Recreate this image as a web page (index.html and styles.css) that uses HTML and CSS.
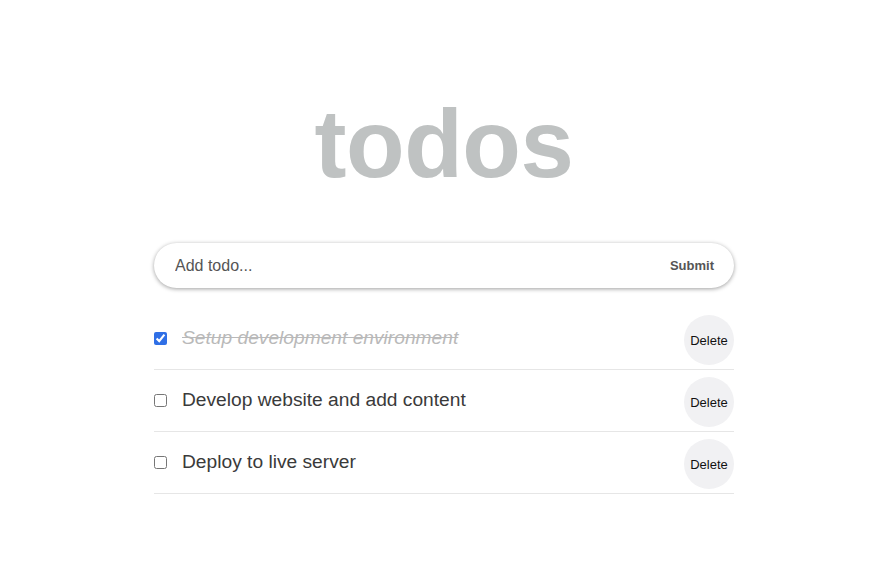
FILE: index.html
```html
<!DOCTYPE html>
<html lang="en">
<head>
<meta charset="utf-8">
<title>todos</title>
<link rel="stylesheet" href="styles.css">
</head>
<body>
<div class="page">
  <main class="app">
    <h1 class="title">todos</h1>
    <form class="add-form">
      <input class="add-input" type="text" placeholder="Add todo...">
      <button class="add-submit" type="button">Submit</button>
    </form>
    <ul class="todo-list">
      <li class="todo-item done">
        <label class="todo-label">
          <input class="todo-check" type="checkbox" checked>
          <span class="todo-text">Setup development environment</span>
        </label>
        <button class="todo-delete" type="button">Delete</button>
      </li>
      <li class="todo-item">
        <label class="todo-label">
          <input class="todo-check" type="checkbox">
          <span class="todo-text">Develop website and add content</span>
        </label>
        <button class="todo-delete" type="button">Delete</button>
      </li>
      <li class="todo-item">
        <label class="todo-label">
          <input class="todo-check" type="checkbox">
          <span class="todo-text">Deploy to live server</span>
        </label>
        <button class="todo-delete" type="button">Delete</button>
      </li>
    </ul>
  </main>
</div>
</body>
</html>
```

FILE: styles.css
```css
* {
  box-sizing: border-box;
}

body {
  margin: 0;
  background: #ffffff;
  font-family: "Liberation Sans", Arial, Helvetica, sans-serif;
  color: #333333;
}

.page {
  padding-left: 11px;
}

.app {
  width: 580px;
  margin: 0 auto;
  padding-top: 96px;
}

.title {
  margin: 0;
  font-size: 96px;
  line-height: 96px;
  font-weight: 700;
  text-align: center;
  color: #bfc2c2;
  letter-spacing: -0.5px;
}

.add-form {
  margin-top: 51px;
  height: 45px;
  border-radius: 23px;
  background: #ffffff;
  box-shadow: 0 1px 4px rgba(0, 0, 0, 0.38);
  display: flex;
  align-items: center;
  padding: 0 20px 0 21px;
}

.add-input {
  flex: 1;
  border: 0;
  outline: none;
  background: transparent;
  font-family: inherit;
  font-size: 16px;
  color: #333;
  padding: 0;
}

.add-input::placeholder {
  color: #555555;
}

.add-submit {
  border: 0;
  background: transparent;
  padding: 0;
  font-family: inherit;
  font-size: 13px;
  font-weight: 700;
  color: #555555;
}

.todo-list {
  list-style: none;
  margin: 20px 0 0;
  padding: 0;
}

.todo-item {
  display: flex;
  align-items: center;
  justify-content: space-between;
  padding: 7px 0 4px;
  border-bottom: 1px solid #e6e6e6;
}

.todo-label {
  display: flex;
  align-items: center;
  margin-bottom: 4px;
}

.todo-check {
  margin: 0;
  width: 13px;
  height: 13px;
  accent-color: #2f6fe6;
}

.todo-text {
  margin-left: 15px;
  font-size: 19.2px;
  color: #3a3a3a;
}

.done .todo-text {
  font-style: italic;
  color: #b9b9b9;
  text-decoration: line-through;
}

.todo-delete {
  width: 50px;
  height: 50px;
  border: 0;
  border-radius: 50%;
  background: #f1f1f3;
  font-family: inherit;
  font-size: 13px;
  color: #111111;
  padding: 0;
}
```
